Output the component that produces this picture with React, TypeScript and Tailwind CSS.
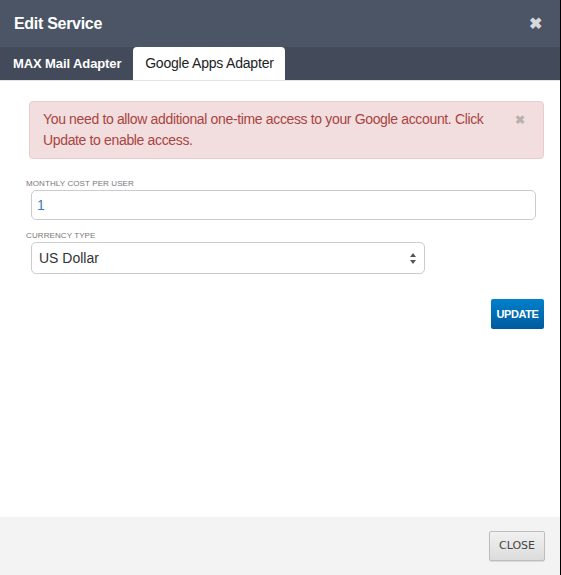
import { useState } from 'react';

export default function App() {
  const [showAlert, setShowAlert] = useState(true);
  const [cost, setCost] = useState('1');
  const [currency, setCurrency] = useState('USD');

  return (
    <div
      className="w-[561px] h-[575px] flex flex-col bg-white border-r border-black overflow-hidden"
      style={{ fontFamily: '"Liberation Sans", Arial, sans-serif' }}
    >
      <header className="h-[47px] shrink-0 bg-[#4b5566] flex items-center justify-between pl-[14px] pr-[18px]">
        <h1 className="text-white text-[16px] font-bold tracking-[-0.3px]">Edit Service</h1>
        <button className="text-[#d5d8dd] text-[16px] font-bold leading-none">✖</button>
      </header>

      <nav className="h-[34px] shrink-0 bg-[#434b5a] flex items-end border-b border-[#e5e5e5] pl-[2px]">
        <button className="h-[33px] px-[11px] text-white text-[13px] font-bold tracking-[-0.1px]">
          MAX Mail Adapter
        </button>
        <button className="h-[33px] ml-[1px] w-[152px] bg-white rounded-t-[4px] text-[#222] text-[14px] tracking-[-0.2px]">
          Google Apps Adapter
        </button>
      </nav>

      <main className="flex-1 px-[16px] pt-[20px]">
        {showAlert && (
          <div className="ml-[13px] bg-[#f2dede] border border-[#ebccd1] rounded-[4px] text-[#a94442] text-[14px] leading-[21px] pl-[13px] pr-[14px] py-[7px] flex justify-between items-start gap-2">
            <p className="tracking-[-0.35px]">You need to allow additional one-time access to your Google account. Click Update to enable access.</p>
            <button
              onClick={() => setShowAlert(false)}
              className="text-[#b9b0b0] text-[12px] font-bold leading-none mt-[5px] mr-[4px]"
            >
              ✖
            </button>
          </div>
        )}

        <label className="block mt-[19px] ml-[10px] text-[8px] text-[#777] uppercase tracking-[0.1px]">
          Monthly Cost Per User
        </label>
        <input
          value={cost}
          onChange={e => setCost(e.target.value)}
          className="block mt-0 ml-[15px] w-[505px] h-[30px] border border-[#ccc] rounded-[5px] px-[5px] text-[14px] text-[#3b7dc1] outline-none"
        />

        <label className="block mt-[10px] ml-[10px] text-[8px] text-[#777] uppercase tracking-[0.1px]">
          Currency Type
        </label>
        <div className="relative mt-0 ml-[15px] w-[394px] h-[32px] border border-[#ccc] rounded-[5px]">
          <select
            value={currency}
            onChange={e => setCurrency(e.target.value)}
            className="appearance-none w-full h-full bg-transparent pl-[7px] text-[14px] text-[#333] outline-none"
          >
            <option value="USD">US Dollar</option>
            <option value="EUR">Euro</option>
          </select>
          <svg className="absolute right-[8px] top-[10px] pointer-events-none" width="6" height="11" viewBox="0 0 6 11">
            <path d="M3 0 L6 4 L0 4 Z M0 7 L6 7 L3 11 Z" fill="#555" />
          </svg>
        </div>

        <div className="flex justify-end mt-[25px]">
          <button className="w-[53px] h-[30px] rounded-[2px] bg-gradient-to-b from-[#0081cc] to-[#005a9e] text-white text-[11px] font-bold tracking-[-0.4px]">
            UPDATE
          </button>
        </div>
      </main>

      <footer className="h-[58px] shrink-0 bg-[#f3f3f3] flex items-center justify-end pr-[15px]">
        <button
          className="w-[56px] h-[30px] border border-[#bdbdbd] rounded-[2px] bg-gradient-to-b from-[#f1f1f1] to-[#dcdcdc] text-[#444] text-[11px] shadow-[0_1px_1px_rgba(0,0,0,0.1)]"
          style={{ fontFamily: '"DejaVu Sans", Verdana, sans-serif' }}
        >
          CLOSE
        </button>
      </footer>
    </div>
  );
}
